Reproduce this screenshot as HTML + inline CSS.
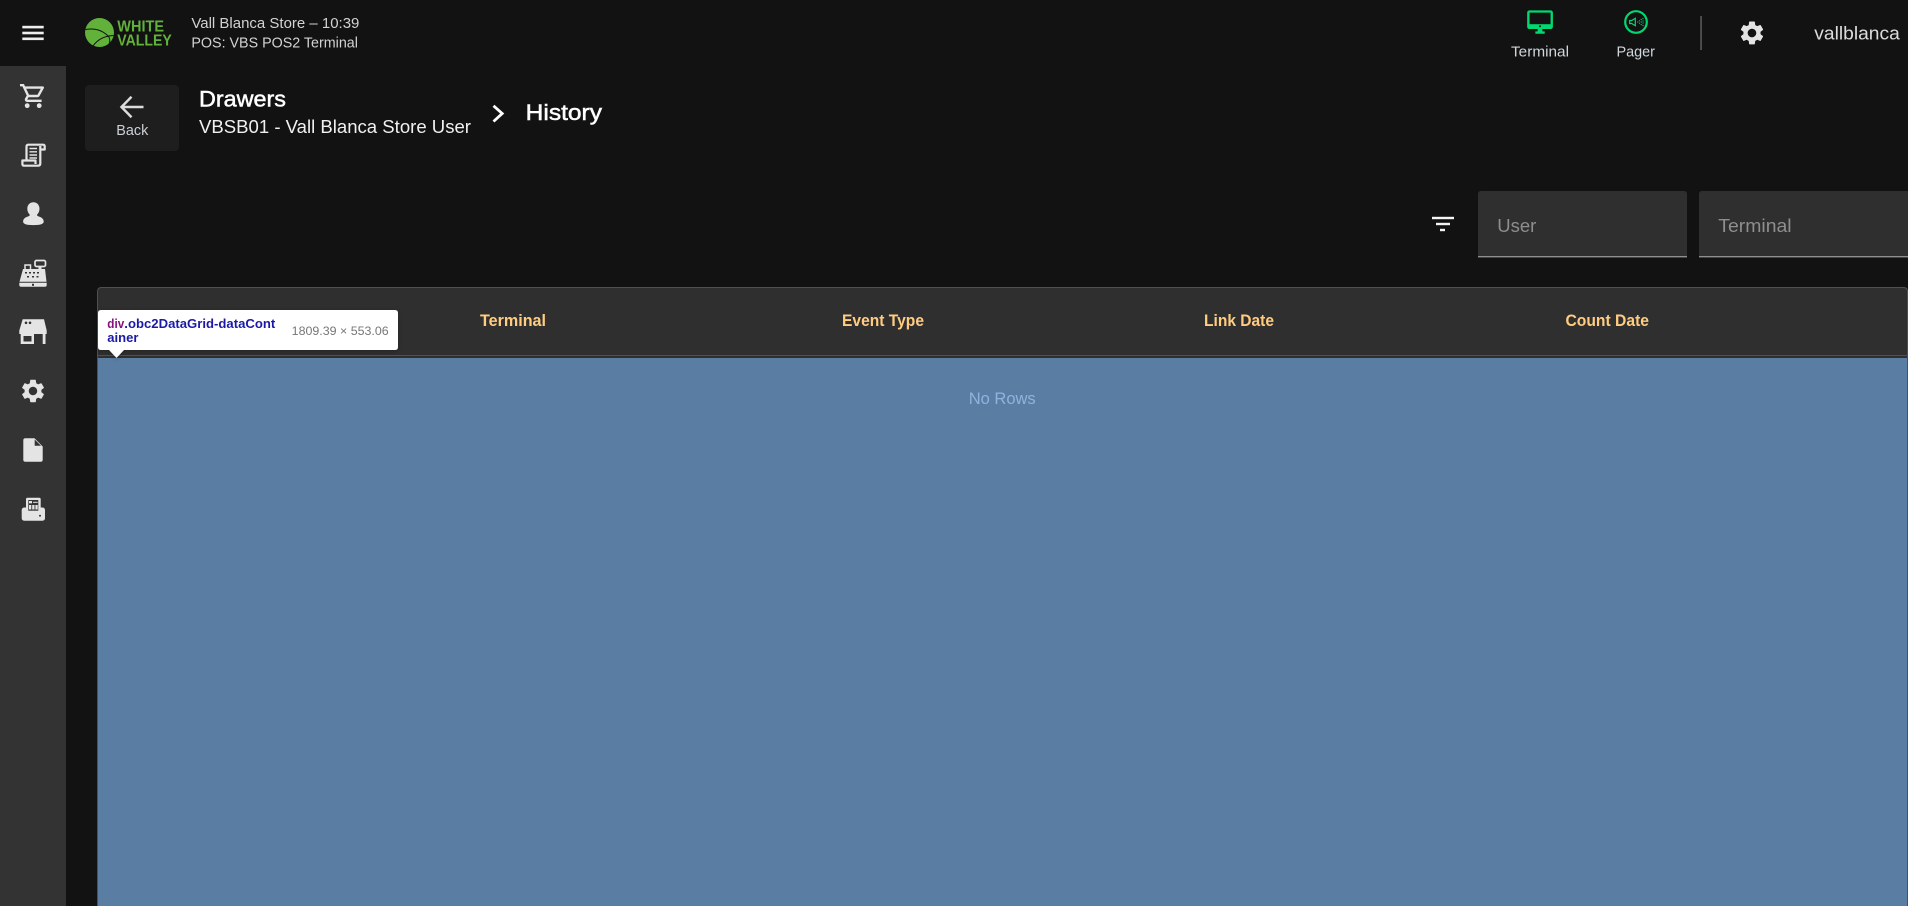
<!DOCTYPE html>
<html lang="en">
<head>
<meta charset="utf-8">
<title>Drawers History</title>
<style>
html,body{margin:0;padding:0;width:1908px;height:906px;overflow:hidden;background:#121212}
svg{display:block;position:absolute;left:0;top:0}
text{font-family:"Liberation Sans",Arial,sans-serif;white-space:pre}
</style>
</head>
<body>
<svg width="1908" height="906" viewBox="0 0 1908 906" xmlns="http://www.w3.org/2000/svg">
<rect width="1908" height="906" fill="#121212"/>
<!-- sidebar -->
<rect x="0" y="66" width="66" height="840" fill="#333333"/>
<!-- hamburger -->
<g fill="#eeeeee"><rect x="22.300" y="25.800" width="21.400" height="2.600"/><rect x="22.300" y="31.700" width="21.400" height="2.600"/><rect x="22.300" y="37.500" width="21.400" height="2.600"/></g>
<!-- logo -->
<circle cx="99.500" cy="32.500" r="14.500" fill="#62b13a"/>
<path d="M85.500 29.500Q100 27 109 37Q111 42 108 46M93 46Q100 36 113.800 35.500" fill="none" stroke="#121212" stroke-width="1"/>
<text x="117.300" y="31.700" font-size="16" font-weight="bold" fill="#62b13a" textLength="46.700" lengthAdjust="spacingAndGlyphs">WHITE</text>
<text x="117.300" y="45.500" font-size="16" font-weight="bold" fill="#62b13a" textLength="54.500" lengthAdjust="spacingAndGlyphs">VALLEY</text>
<!-- store text -->
<text x="191.400" y="28" font-size="14.500" fill="#d2d2d2" textLength="168" lengthAdjust="spacingAndGlyphs">Vall Blanca Store – 10:39</text>
<text x="191.400" y="47.700" font-size="14.500" fill="#d2d2d2" textLength="166.500" lengthAdjust="spacingAndGlyphs">POS: VBS POS2 Terminal</text>
<!-- back button -->
<rect x="85" y="85" width="94" height="66" rx="4" fill="#1e1e1e"/>
<path d="M143.500 107H122M131.500 96.800L121.500 107L131.500 117.200" fill="none" stroke="#dcdcdc" stroke-width="2.500"/>
<text x="116.300" y="134.800" font-size="14.500" fill="#c9d0d6" textLength="32" lengthAdjust="spacingAndGlyphs">Back</text>
<!-- breadcrumb -->
<text x="199" y="106.500" font-size="22.500" fill="#ffffff" stroke="#ffffff" stroke-width="0.500" textLength="87" lengthAdjust="spacingAndGlyphs">Drawers</text>
<text x="199" y="133" font-size="18.500" fill="#f0f0f0" textLength="272" lengthAdjust="spacingAndGlyphs">VBSB01 - Vall Blanca Store User</text>
<path d="M493.500 105.800L502.200 113.500L493.500 121.500" fill="none" stroke="#ffffff" stroke-width="2.800"/>
<text x="525.700" y="120" font-size="22.500" fill="#ffffff" stroke="#ffffff" stroke-width="0.500" textLength="76.300" lengthAdjust="spacingAndGlyphs">History</text>
<!-- top right: terminal -->
<g transform="translate(1526 8) scale(1.170)" fill="#00d96f"><path d="M21 2H3c-1.100 0-2 .9-2 2v12c0 1.100.9 2 2 2h7v2H8v2h8v-2h-2v-2h7c1.100 0 2-.9 2-2V4c0-1.100-.9-2-2-2zm0 14H3V4h18v12z"/></g>
<rect x="1528" y="24.200" width="24" height="3" fill="#00d96f"/>
<circle cx="1540" cy="26.300" r="1" fill="#121212"/>
<text x="1511" y="56.700" font-size="14.500" fill="#cfd6dc" textLength="58" lengthAdjust="spacingAndGlyphs">Terminal</text>
<!-- pager -->
<circle cx="1636" cy="22" r="10.800" fill="none" stroke="#00d96f" stroke-width="2.200"/>
<path d="M1629.700 20.500h2l3.600-2.200v7.400l-3.600-2.200h-2z" fill="none" stroke="#00d96f" stroke-width="1.200"/>
<g fill="#00d96f"><circle cx="1637.800" cy="22" r=".6"/><circle cx="1639.500" cy="20.800" r=".6"/><circle cx="1639.500" cy="23.200" r=".6"/><circle cx="1641.200" cy="19.500" r=".6"/><circle cx="1641.200" cy="22" r=".6"/><circle cx="1641.200" cy="24.500" r=".6"/><circle cx="1643" cy="18.500" r=".6"/><circle cx="1643" cy="21" r=".6"/><circle cx="1643" cy="23" r=".6"/><circle cx="1643" cy="25.500" r=".6"/></g>
<text x="1616.500" y="56.700" font-size="14.500" fill="#cfd6dc" textLength="38.500" lengthAdjust="spacingAndGlyphs">Pager</text>
<rect x="1700.300" y="16" width="1.500" height="34" fill="#5e5e5e"/>
<g transform="translate(1737.700 18.700) scale(1.190)" fill="#e4e4e4"><path d="M19.140 12.940c.04-.3.06-.61.06-.94 0-.32-.02-.64-.07-.94l2.030-1.580c.18-.14.23-.41.12-.61l-1.920-3.320c-.12-.22-.37-.29-.59-.22l-2.390.96c-.5-.38-1.030-.7-1.620-.94l-.36-2.540c-.04-.24-.24-.41-.48-.41h-3.840c-.24 0-.43.17-.47.41l-.36 2.540c-.59.24-1.130.57-1.620.94l-2.390-.96c-.22-.08-.47 0-.59.22L2.740 8.870c-.12.21-.08.47.12.61l2.030 1.580c-.05.3-.09.63-.09.94s.02.64.07.94l-2.030 1.580c-.18.14-.23.41-.12.61l1.920 3.320c.12.22.37.29.59.22l2.390-.96c.5.38 1.030.7 1.620.94l.36 2.540c.05.24.24.41.48.41h3.840c.24 0 .44-.17.47-.41l.36-2.540c.59-.24 1.130-.56 1.620-.94l2.390.96c.22.08.47 0 .59-.22l1.920-3.320c.12-.22.07-.47-.12-.61l-2.010-1.580zM12 15.600c-1.980 0-3.600-1.620-3.600-3.600s1.620-3.600 3.600-3.600 3.600 1.620 3.600 3.600-1.620 3.600-3.600 3.600z"/></g>
<text x="1814.300" y="39.500" font-size="18.500" fill="#dcdcdc" textLength="85.500" lengthAdjust="spacingAndGlyphs">vallblanca</text>
<!-- sidebar icons -->
<g transform="translate(18.800 81.600) scale(1.200)" fill="#e4e4e4"><path d="M15.550 13c.75 0 1.410-.41 1.750-1.030l3.580-6.490c.37-.66-.11-1.480-.87-1.480H5.210l-.94-2H1v2h2l3.600 7.590-1.350 2.440C4.520 15.370 5.480 17 7 17h12v-2H7l1.100-2h7.450zM6.160 6h12.150l-2.760 5H8.530L6.160 6zM7 18c-1.100 0-1.990.9-1.990 2S5.900 22 7 22s2-.9 2-2-.9-2-2-2zm10 0c-1.100 0-1.990.9-1.990 2s.89 2 1.990 2 2-.9 2-2-.9-2-2-2z"/></g>
<!-- receipt -->
<g fill="none" stroke="#e4e4e4" stroke-width="2.200" stroke-linejoin="round">
<path d="M26.500 160V146.500Q26.500 144.700 28.500 144.700H43Q44.700 144.700 44.700 146.500V149.500H40.500M40.300 146V163.500Q40.300 165.700 38 165.700H24Q22.400 165.700 22.400 164V160.500H35.500V164"/>
<path d="M29.500 148.500H37M29.500 151.800H37M29.500 155H37M29.500 158H37" stroke-width="1.400"/>
</g>
<!-- person -->
<path d="M33.400 202.300c3.800 0 6.100 2.900 6.100 6.500 0 2.500-1 4.600-2.500 5.900 0 1 .6 1.400 2.200 1.900 2.600.8 4.500 2.500 4.500 5 0 2.100-2.500 3.500-10.300 3.500s-10.300-1.400-10.300-3.500c0-2.500 1.900-4.200 4.500-5 1.600-.5 2.200-.9 2.200-1.900-1.500-1.300-2.500-3.400-2.500-5.900 0-3.600 2.300-6.500 6.100-6.500z" fill="#e4e4e4"/>
<!-- cash register -->
<g>
<rect x="35" y="260.500" width="10.500" height="6" rx="1.500" fill="none" stroke="#e4e4e4" stroke-width="1.700"/>
<rect x="38.500" y="266.500" width="3" height="3" fill="#e4e4e4"/>
<rect x="25" y="265" width="5.500" height="6" fill="none" stroke="#e4e4e4" stroke-width="1.500"/>
<path d="M23 269H45L46.500 281.700H19.500Z" fill="#e4e4e4"/>
<path d="M19.300 282.700H46.700V285Q46.700 286.700 45 286.700H21Q19.300 286.700 19.300 285Z" fill="#e4e4e4"/>
<g fill="#333333"><rect x="25" y="272" width="2" height="1.500"/><rect x="29" y="272" width="2" height="1.500"/><rect x="33" y="272" width="2" height="1.500"/><rect x="37" y="272" width="2" height="1.500"/><rect x="27" y="276" width="2" height="1.500"/><rect x="32" y="276" width="2" height="1.500"/><rect x="36.500" y="276" width="2" height="1.500"/><rect x="32" y="283.800" width="2" height="2"/></g>
</g>
<!-- store -->
<path d="M22.700 319.300H44L46.700 330.500V334H19.300V330.500Z" fill="#e4e4e4"/>
<circle cx="26" cy="322.800" r="1.300" fill="#333333"/><circle cx="30" cy="322.800" r="1.300" fill="#333333"/>
<path d="M20.700 334H34V344H20.700ZM23.500 336V341.500H31.500V336Z" fill="#e4e4e4" fill-rule="evenodd"/>
<rect x="42.700" y="334" width="2.800" height="10" fill="#e4e4e4"/>
<!-- gear -->
<g transform="translate(19 377) scale(1.167)" fill="#e4e4e4"><path d="M19.140 12.940c.04-.3.06-.61.06-.94 0-.32-.02-.64-.07-.94l2.030-1.580c.18-.14.23-.41.12-.61l-1.920-3.320c-.12-.22-.37-.29-.59-.22l-2.390.96c-.5-.38-1.030-.7-1.620-.94l-.36-2.540c-.04-.24-.24-.41-.48-.41h-3.840c-.24 0-.43.17-.47.41l-.36 2.540c-.59.24-1.130.57-1.620.94l-2.390-.96c-.22-.08-.47 0-.59.22L2.740 8.870c-.12.21-.08.47.12.61l2.030 1.580c-.05.3-.09.63-.09.94s.02.64.07.94l-2.030 1.580c-.18.14-.23.41-.12.61l1.920 3.320c.12.22.37.29.59.22l2.390-.96c.5.38 1.030.7 1.620.94l.36 2.540c.05.24.24.41.48.41h3.840c.24 0 .44-.17.47-.41l.36-2.540c.59-.24 1.130-.56 1.620-.94l2.390.96c.22.08.47 0 .59-.22l1.920-3.320c.12-.22.07-.47-.12-.61l-2.010-1.580zM12 15.600c-1.980 0-3.600-1.620-3.600-3.600s1.620-3.600 3.600-3.600 3.600 1.620 3.600 3.600-1.620 3.600-3.600 3.600z"/></g>
<!-- file -->
<path d="M25.300 438.300H34.500L42.700 446.500V459.800Q42.700 461.800 40.700 461.800H25.300Q23.300 461.800 23.300 459.800V440.300Q23.300 438.300 25.300 438.300Z" fill="#e4e4e4"/>
<path d="M34.700 439.500V445.800H41Z" fill="#333333"/>
<!-- pos terminal -->
<rect x="21.700" y="507.500" width="23.300" height="13.200" rx="2.500" fill="#e4e4e4"/>
<rect x="26" y="497.700" width="14.700" height="14.300" rx="1.500" fill="#e4e4e4"/>
<rect x="28.300" y="500" width="10" height="10.700" fill="#333333"/>
<g fill="#e4e4e4"><rect x="29" y="501" width="3" height="2.300"/><rect x="33" y="501.800" width="4.700" height="1"/><rect x="29" y="505" width="2.300" height="4.500"/><rect x="32.200" y="505" width="2.300" height="4.500"/><rect x="35.400" y="505" width="2.300" height="4.500"/></g>
<circle cx="40" cy="515.700" r="1" fill="#333333"/>
<!-- filter -->
<g fill="#f4f4f4"><rect x="1432" y="216.800" width="22" height="2.400"/><rect x="1436" y="222.800" width="14" height="2.400"/><rect x="1440" y="228.800" width="5" height="2.400"/></g>
<!-- inputs -->
<path d="M1478 257V194Q1478 191 1481 191H1684Q1687 191 1687 194V257Z" fill="#2f2f2f"/>
<rect x="1478" y="256.300" width="209" height="1" fill="#b8b8b8"/>
<text x="1497.300" y="232" font-size="18.500" fill="#8e8e8e" textLength="39" lengthAdjust="spacingAndGlyphs">User</text>
<path d="M1699 257V194Q1699 191 1702 191H1908V257Z" fill="#2f2f2f"/>
<rect x="1699" y="256.300" width="209" height="1" fill="#b8b8b8"/>
<text x="1718.300" y="232" font-size="18.500" fill="#8e8e8e" textLength="73.300" lengthAdjust="spacingAndGlyphs">Terminal</text>
<!-- table -->
<path d="M97.500 906V291.500Q97.500 287.500 101.500 287.500H1903.500Q1907.500 287.500 1907.500 291.500V906Z" fill="#2f2f2f" stroke="#505050" stroke-width="1"/>
<rect x="98" y="355" width="1809" height="1" fill="#505050"/>
<rect x="98" y="358" width="1809" height="548" fill="#5a7da3"/>
<text x="480" y="325.800" font-size="16.500" font-weight="bold" fill="#ffcc80" textLength="66" lengthAdjust="spacingAndGlyphs">Terminal</text>
<text x="842" y="325.800" font-size="16.500" font-weight="bold" fill="#ffcc80" textLength="82" lengthAdjust="spacingAndGlyphs">Event Type</text>
<text x="1204" y="325.800" font-size="16.500" font-weight="bold" fill="#ffcc80" textLength="70" lengthAdjust="spacingAndGlyphs">Link Date</text>
<text x="1565.500" y="325.800" font-size="16.500" font-weight="bold" fill="#ffcc80" textLength="83.500" lengthAdjust="spacingAndGlyphs">Count Date</text>
<text x="968.700" y="404" font-size="16.500" fill="#8fb3dc" textLength="67" lengthAdjust="spacingAndGlyphs">No Rows</text>
<!-- devtools tooltip -->
<g style="filter:drop-shadow(0 1px 2px rgba(0,0,0,.25))">
<path d="M101 310H395Q398 310 398 313V347Q398 350 395 350H124L116.500 358L109 350H101Q98 350 98 347V313Q98 310 101 310Z" fill="#ffffff"/>
</g>
<text x="107.300" y="328" font-size="13" font-weight="bold" fill="#881280" textLength="17" lengthAdjust="spacingAndGlyphs">div</text>
<text x="124.300" y="328" font-size="13" font-weight="bold" fill="#1a1aa6" textLength="151" lengthAdjust="spacingAndGlyphs">.obc2DataGrid-dataCont</text>
<text x="107.300" y="342" font-size="13" font-weight="bold" fill="#1a1aa6" textLength="31.200" lengthAdjust="spacingAndGlyphs">ainer</text>
<text x="291.700" y="335" font-size="12" fill="#777777" textLength="97" lengthAdjust="spacingAndGlyphs">1809.39 × 553.06</text>
</svg>
</body>
</html>
